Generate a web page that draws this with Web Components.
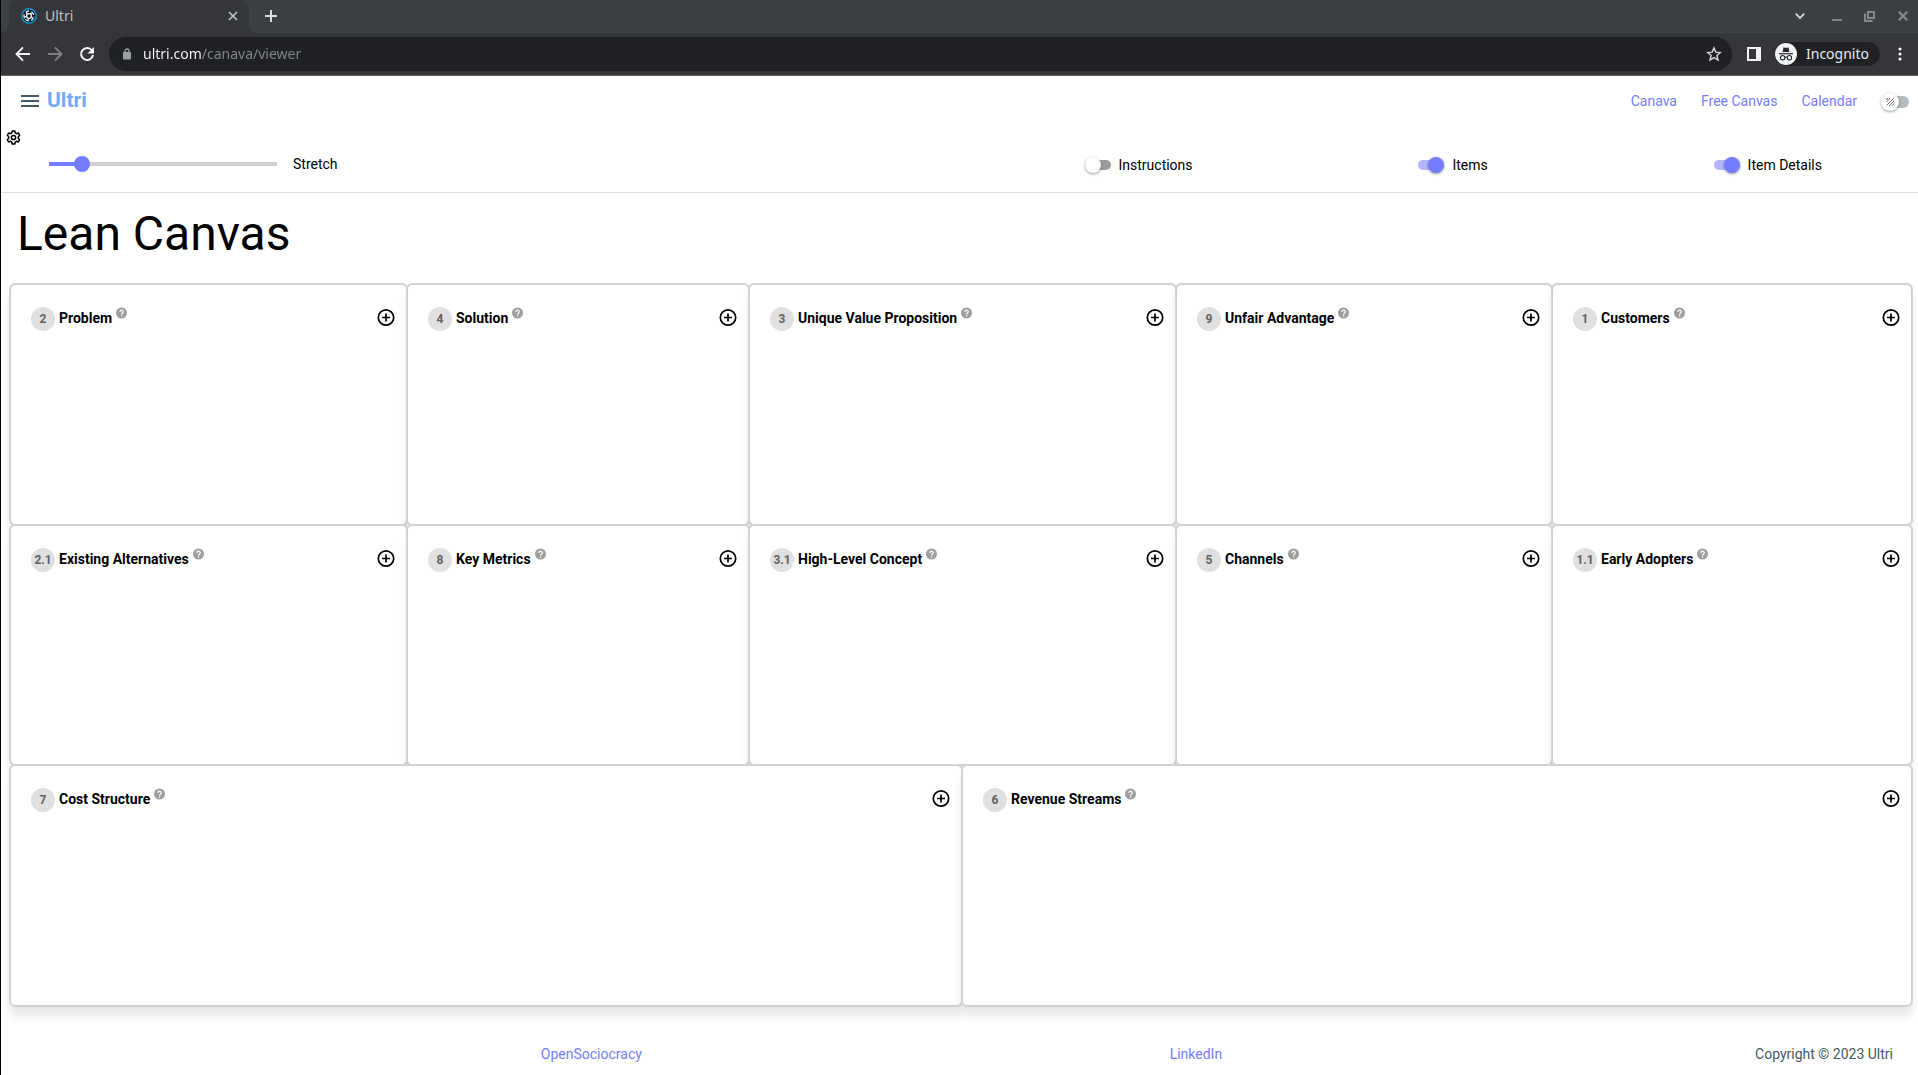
<!DOCTYPE html>
<html lang="en">
<head>
<meta charset="utf-8">
<title>Ultri</title>
<style>
  html { height: 100%; }
  body { margin: 0; min-height: 100vh; box-sizing: border-box; border-left: 1px solid #000; background: #fff; color: #000; font: 14px/20px Roboto, sans-serif; display: flex; flex-direction: column; }
  canvas-board { flex: 1; }
</style>
</head>
<body>
<browser-chrome></browser-chrome>
<app-header>
  <nav-link href="#canava">Canava</nav-link>
  <nav-link href="#free">Free Canvas</nav-link>
  <nav-link href="#calendar">Calendar</nav-link>
</app-header>
<canvas-settings>
  <toggle-switch>Instructions</toggle-switch>
  <toggle-switch on>Items</toggle-switch>
  <toggle-switch on>Item Details</toggle-switch>
</canvas-settings>
<canvas-board name="Lean Canvas">
  <canvas-row cols="397fr 342fr 427fr 376fr 360fr">
    <canvas-cell num="2">Problem</canvas-cell>
    <canvas-cell num="4">Solution</canvas-cell>
    <canvas-cell num="3">Unique Value Proposition</canvas-cell>
    <canvas-cell num="9">Unfair Advantage</canvas-cell>
    <canvas-cell num="1">Customers</canvas-cell>
  </canvas-row>
  <canvas-row cols="397fr 342fr 427fr 376fr 360fr">
    <canvas-cell num="2.1">Existing Alternatives</canvas-cell>
    <canvas-cell num="8">Key Metrics</canvas-cell>
    <canvas-cell num="3.1">High-Level Concept</canvas-cell>
    <canvas-cell num="5">Channels</canvas-cell>
    <canvas-cell num="1.1">Early Adopters</canvas-cell>
  </canvas-row>
  <canvas-row cols="952fr 950fr">
    <canvas-cell num="7">Cost Structure</canvas-cell>
    <canvas-cell num="6">Revenue Streams</canvas-cell>
  </canvas-row>
</canvas-board>
<app-footer></app-footer>

<script>
const define = (name, html, setup) => {
  const template = document.createElement('template');
  template.innerHTML = html;
  customElements.define(name, class extends HTMLElement {
    constructor() {
      super();
      this.attachShadow({ mode: 'open' }).append(template.content.cloneNode(true));
    }
    connectedCallback() { if (setup) setup(this, this.shadowRoot); }
  });
};

define('browser-chrome', `
<style>
  :host { display: block; background: #35363a; font: 14px/20px "Noto Sans", sans-serif; color: #e8eaed; border-bottom: 1px solid #5d5c61; }
  button { all: unset; display: flex; align-items: center; justify-content: center; flex: none; }
  svg { display: block; }
  .strip { display: flex; height: 33px; background: #3c4043; }
  .edge { width: 8px; border-bottom-right-radius: 8px; }
  .lead, .rest { background: #35363a; }
  .lead .edge { height: 33px; background: #3c4043; }
  .rest { flex: 1; }
  .rest > div { box-sizing: border-box; height: 33px; padding-bottom: 1px; display: flex; align-items: center; background: #3c4043; border-bottom-left-radius: 8px; }
  .tab { width: 240px; height: 33px; box-sizing: border-box; padding: 0 8px 1px 12px; display: flex; align-items: center; gap: 8px; background: #35363a; border-radius: 8px 8px 0 0; color: #bdc1c6; }
  .tab span { flex: 1; }
  .tab button { width: 16px; height: 16px; }
  .plus { width: 28px; height: 28px; margin-left: 8px; }
  .wins { margin-left: auto; display: flex; gap: 17px; padding-right: 7px; }
  .wins button { width: 16px; height: 16px; }
  .wins .menu { margin-right: 4px; }
  .bar { display: flex; align-items: center; height: 42px; padding: 0 10px 0 14px; }
  .nav { display: flex; gap: 16px; }
  .nav button { width: 16px; height: 16px; }
  .omni { flex: 1; display: flex; align-items: center; height: 34px; margin: 0 15px 0 14px; padding: 0 10px 0 14px; border-radius: 17px; background: #202124; }
  input { flex: 1; border: 0; padding: 0; margin: 0 0 0 12px; outline: 0; font: 14px/20px "Noto Sans", sans-serif; color: transparent; background: linear-gradient(90deg, #fff 59px, #85888c 59px); -webkit-background-clip: text; background-clip: text; }
  .pill { display: flex; align-items: center; gap: 9px; height: 26px; margin: 0 11px 0 12px; padding: 0 11px 0 1px; border-radius: 14px; background: #202124; border: 1px solid #3a3c3f; box-sizing: border-box; }
  .dots { width: 16px; height: 16px; }
</style>
<div class="strip">
  <div class="lead"><div class="edge"></div></div>
  <div class="tab">
    <svg width="16" height="16" viewBox="0 0 16 16" fill="none"><circle cx="8" cy="8" r="7.2" fill="#08131c" stroke="#1a93cf" stroke-width="1.500"/><circle cx="8" cy="8" r="5.200" stroke="#1a93cf" stroke-width="1" stroke-dasharray="4.500 2"/><circle cx="8" cy="8" r="2.400" stroke="#f5f7f8" stroke-width="1.300"/><path d="M6 6.400 5.400 4q1.300-.9 2.600-.8M9 5.500l2.300-.8q1 .9 1.300 2.200M10.500 8.800l1.400 1.800q-.7 1.200-1.700 1.800M7.900 10.600l-1.100 2q-1.500-.3-2.500-1.200M5.500 8.600l-2.300.4q-.5-1.300 0-2.600" stroke="#f5f7f8" stroke-width="1.200"/></svg>
    <span>Ultri</span>
    <button aria-label="Close tab"><svg width="10" height="10" viewBox="0 0 10 10"><path d="M1 1l8 8M9 1L1 9" stroke="#c4c7c9" stroke-width="1.6"/></svg></button>
  </div>
  <div class="rest"><div>
    <button class="plus" aria-label="New tab"><svg width="12" height="12" viewBox="0 0 12 12"><path d="M6 0v12M0 6h12" stroke="#dadce0" stroke-width="2"/></svg></button>
    <div class="wins">
      <button class="menu" aria-label="Search tabs"><svg width="10" height="6" viewBox="0 0 10 6" fill="none"><path d="M.7.7 5 5 9.3.7" stroke="#d5d7d9" stroke-width="1.8"/></svg></button>
      <button aria-label="Minimize"><svg width="16" height="16" viewBox="0 0 16 16"><path d="M3 12h10" stroke="#85888b" stroke-width="2"/></svg></button>
      <button aria-label="Restore"><svg width="12" height="12" viewBox="0 0 12 12" fill="none" stroke="#85888b" stroke-width="2"><path d="M4 2h6v6H4zM1 3.5V11h7.5"/></svg></button>
      <button aria-label="Close window"><svg width="10" height="10" viewBox="0 0 10 10"><path d="M.7.7l8.6 8.6M9.3.7.7 9.3" stroke="#85888b" stroke-width="2.2"/></svg></button>
    </div>
  </div></div>
</div>
<div class="bar">
  <div class="nav">
    <button aria-label="Back"><svg width="16" height="16" viewBox="0 0 16 16" fill="none" stroke="#f1f3f4" stroke-width="2"><path d="M15 8H2.4M8 1.4 1.6 8 8 14.6"/></svg></button>
    <button aria-label="Forward"><svg width="16" height="16" viewBox="0 0 16 16" fill="none" stroke="#7d7f83" stroke-width="2"><path d="M1 8h12.600M8 1.400 14.400 8 8 14.600"/></svg></button>
    <button aria-label="Reload"><svg width="16" height="16" viewBox="0 0 16 16"><path d="M13 4.500A6 6 0 1 0 14 9" fill="none" stroke="#f1f3f4" stroke-width="2"/><path d="M15 1v6.500H8.500z" fill="#f1f3f4"/></svg></button>
  </div>
  <div class="omni">
    <svg width="8" height="12" viewBox="0 0 8 12"><path d="M2 5V3a2 2 0 0 1 4 0v2" fill="none" stroke="#9aa0a6" stroke-width="1.300"/><rect y="4" width="8" height="7.500" rx="1" fill="#9aa0a6"/></svg>
    <input type="text" aria-label="Address" value="ultri.com/canava/viewer">
    <button aria-label="Bookmark"><svg width="16" height="16" viewBox="0 0 16 16"><path d="m8 1.900 1.800 4.200 4.600.4-3.500 3 1.100 4.500L8 11.600 4 14l1.100-4.500-3.500-3 4.600-.4z" fill="none" stroke="#d5d7d9" stroke-width="1.400"/></svg></button>
  </div>
  <button aria-label="Side panel"><svg width="14" height="14" viewBox="0 0 14 14"><path fill="#f1f3f4" fill-rule="evenodd" d="M0 0h14v14H0zM2 2v10h7V2z"/></svg></button>
  <button class="pill"><svg width="22" height="22" viewBox="0 0 22 22"><circle cx="11" cy="11" r="11" fill="#f1f3f4"/><path d="M7.500 9 8.500 4.500c.9-.3 1.500.3 2.500.3s1.600-.6 2.500-.3l1 4.500z" fill="#26282b"/><path d="M4 10.700h14" stroke="#26282b" stroke-width="1.200"/><g fill="none" stroke="#26282b" stroke-width="1.100"><circle cx="7.600" cy="14.700" r="2.200"/><circle cx="14.400" cy="14.700" r="2.200"/><path d="M9.800 14.400q1.200-.8 2.400 0"/></g></svg>Incognito</button>
  <button class="dots" aria-label="Menu"><svg width="4" height="14" viewBox="0 0 4 14" fill="#f1f3f4"><circle cx="2" cy="2" r="1.600"/><circle cx="2" cy="7" r="1.600"/><circle cx="2" cy="12" r="1.600"/></svg></button>
</div>`);

define('nav-link', `
<style>
  :host { display: block; }
  a { color: #757dff; text-decoration: none; }
</style>
<a><slot></slot></a>`, (el, root) => { root.querySelector('a').href = el.getAttribute('href'); });

define('app-header', `
<style>
  :host { display: flex; align-items: center; height: 50px; padding: 0 9px 0 20px; }
  button { all: unset; display: flex; }
  h2 { margin: 0 auto 0 8px; padding-bottom: 2px; font-size: 21px; line-height: 28px; font-weight: 700; color: #74a9fa; }
  nav { display: flex; gap: 24px; margin-right: 24px; }
  .dark { display: grid; align-items: center; padding-top: 2px; }
  .dark > * { grid-area: 1 / 1; }
  .track { width: 24px; height: 12px; border-radius: 6px; background: #b3bbbf; justify-self: end; }
  input { appearance: none; margin: 0; width: 28px; height: 18px; display: flex; align-items: center; }
  input::before { content: ""; width: 18px; height: 18px; border-radius: 9px; background: #fff; box-shadow: 0 1px 3px rgba(0,0,0,.4); }
  .sun { margin-left: 4px; pointer-events: none; z-index: 1; }
</style>
<button aria-label="Menu"><svg width="18" height="12" viewBox="0 0 18 12" fill="#455a64"><path d="M0 0h18v2H0zM0 5h18v2H0zM0 10h18v2H0z"/></svg></button>
<h2>Ultri</h2>
<nav><slot></slot></nav>
<label class="dark"><span class="track"></span><input type="checkbox" role="switch" aria-label="Dark mode">
<svg class="sun" width="10" height="10" viewBox="0 0 10 10" fill="none" stroke="#777" stroke-width="1"><path d="M1 2.500h1.500M2.500 1v1M1.500 4.500l2-1M4.500 1 4 3M8.500 1.500l-7 7M9 4 4 9M9 6.500 6.500 9"/></svg></label>`);

define('toggle-switch', `
<style>
  :host { display: block; }
  label { display: flex; align-items: center; gap: 8px; }
  input { appearance: none; margin: 0; width: 26px; height: 10px; border-radius: 5px; background: #9b9b9b; display: flex; align-items: center; }
  input::before { content: ""; flex: none; width: 16px; height: 16px; border-radius: 50%; background: #fff; box-shadow: 0 1px 3px rgba(0,0,0,.4); }
  input:checked { background: #b3b7ff; justify-content: flex-end; }
  input:checked::before { background: #757dff; }
</style>
<label><input type="checkbox" role="switch"><span><slot></slot></span></label>`,
(el, root) => { root.querySelector('input').checked = el.hasAttribute('on'); });

define('canvas-settings', `
<style>
  :host { display: block; border-bottom: 1px solid #e0e0e0; }
  button { all: unset; display: flex; padding: 4px 5px; }
  .row { display: grid; grid-template-columns: 1fr 1fr; align-items: start; padding: 5px 0 16px; }
  .half { display: flex; align-items: center; }
  .stretch { gap: 16px; padding-left: 48px; }
  .toggles { justify-content: space-between; padding: 1px 96px 1px 125px; }
  input { appearance: none; width: 228px; height: 16px; margin: 0; border-radius: 2px; background: linear-gradient(90deg, #757dff 33px, #cfcfcf 33px) center / 100% 4px no-repeat; }
  input::-webkit-slider-thumb { appearance: none; width: 16px; height: 16px; border-radius: 50%; background: #757dff; }
</style>
<button aria-label="Settings"><svg width="15" height="15" viewBox="0 0 15 15" fill="none" stroke="#000" stroke-width="1.500" stroke-linejoin="round"><path d="M6.200 1h2.600l.4 1.900 1.300.8 1.900-.7 1.300 2.300L12.300 6.700v1.600l1.400 1.400-1.300 2.300-1.900-.7-1.300.8-.4 1.900H6.200l-.4-1.900-1.300-.8-1.900.7L1.300 9.700l1.400-1.400V6.700L1.300 5.300 2.600 3l1.900.7 1.300-.8z"/><circle cx="7.500" cy="7.500" r="2.100"/></svg></button>
<div class="row">
  <div class="half stretch"><input id="stretch" type="range" min="0" max="100" value="12"><label for="stretch">Stretch</label></div>
  <div class="half toggles"><slot></slot></div>
</div>`);

define('canvas-board', `
<style>
  :host { display: flex; flex-direction: column; padding: 0 6px 0 9px; }
  h1 { margin: 0; padding: 17px 7px 26px 7px; font-size: 48px; line-height: 48px; font-weight: 400; }
  .rows { flex: 1; display: grid; grid-auto-rows: minmax(120px, 1fr); }
</style>
<h1></h1>
<div class="rows"><slot></slot></div>`,
(el, root) => { root.querySelector('h1').textContent = el.getAttribute('name'); });

define('canvas-row', `
<style>:host { display: grid; grid-template-columns: var(--cols); }</style><slot></slot>`,
(el) => { el.style.setProperty('--cols', el.getAttribute('cols')); });

define('canvas-cell', `
<style>
  :host { display: block; box-sizing: border-box; border: 1px solid #cfcfcf; border-radius: 5px; background: #fff; box-shadow: 0 0 0 1px #d6d6d6, 0 10px 10px rgba(0,0,0,.1); padding: 22px 10px 20px 20px; }
  header { display: flex; align-items: flex-start; }
  .num { flex: none; width: 24px; height: 24px; border-radius: 50%; background: #e0e0e0; color: #616161; font-size: 12px; line-height: 24px; font-weight: 700; text-align: center; }
  h3 { margin: 0 4px; font-size: 14px; line-height: 22px; font-weight: 700; }
  .add { margin-left: auto; }
  button { all: unset; display: flex; }
</style>
<header>
  <span class="num"></span><h3><slot></slot></h3>
  <button class="help" aria-label="Help"><svg width="11" height="12" viewBox="0 0 11 12"><circle cx="5.500" cy="6" r="5.500" fill="#9e9e9e"/><path d="M3.900 4.900c0-2.300 3.400-2.200 3.400-.1 0 1.100-1.700 1.300-1.700 2.600M5.600 8.200v1.200" fill="none" stroke="#fff" stroke-width="1.200"/></svg></button>
  <button class="add" aria-label="Add item"><svg width="20" height="21" viewBox="0 0 20 21" fill="none" stroke="#000" stroke-width="1.700"><circle cx="10" cy="10.500" r="7.700"/><path d="M10 6.500v8M6 10.500h8"/></svg></button>
</header>`,
(el, root) => { root.querySelector('.num').textContent = el.getAttribute('num'); });

define('app-footer', `
<style>
  :host { display: flex; justify-content: space-between; align-items: center; height: 69px; box-sizing: border-box; padding: 27px 25px 0 12px; color: #455a64; }
  .copy { min-width: 143px; text-align: right; }
</style>
<span></span><nav-link href="#opensociocracy">OpenSociocracy</nav-link><nav-link href="#linkedin">LinkedIn</nav-link><span class="copy">Copyright © 2023 Ultri</span>`);
</script>
</body>
</html>
